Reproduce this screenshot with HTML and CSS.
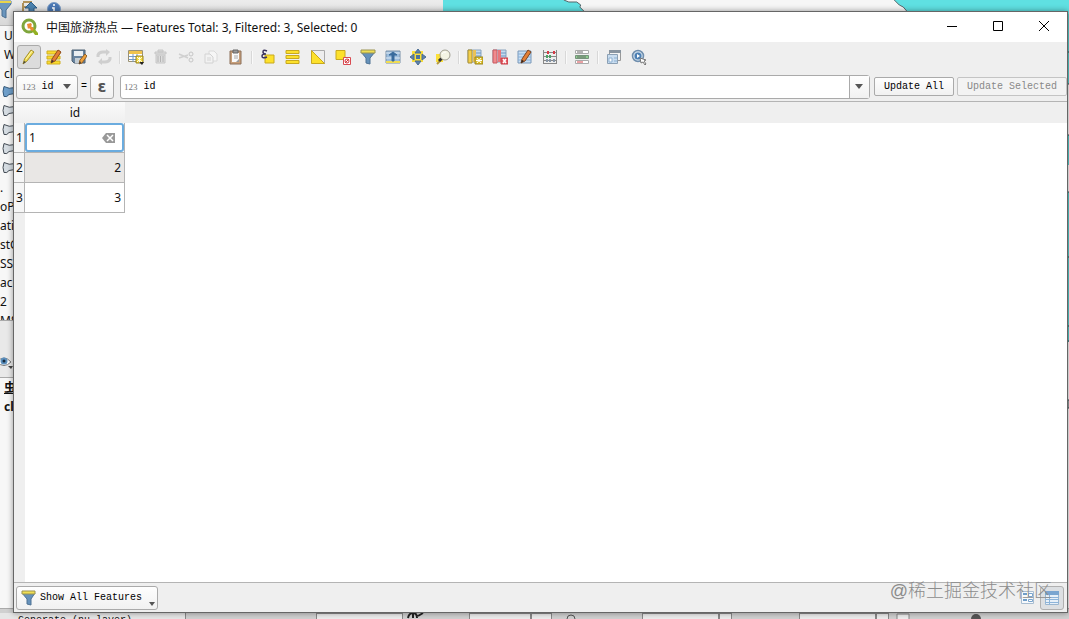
FILE: index.html
```html
<!DOCTYPE html>
<html lang="en">
<head>
    <meta charset="utf-8">
    <title>中国旅游热点 — Attribute Table</title>
    <link rel="stylesheet" href="styles.css">
</head>
<body>
    <!-- main application behind the dialog -->
    <div class="desktop">
        <div class="workspace">
            <div class="side">
                <div class="sideTools">
                    <svg width="72" height="20" viewBox="0 0 72 20">
                        <path d="M-3 1h14v3l-5 6v8l-4-2v-6l-5-6z" fill="#6b96bd" stroke="#4b6f91"/>
                        <path d="M-3 1h14v2h-14z" fill="#e8d44a"/>
                        <path d="M23 2h9M23 7h7M23 12h7M23 3v11" stroke="#b0935c" stroke-width="2" fill="none"/>
                        <path d="M31 2l6 6h-3v8h-5v-8h-4z" fill="#4c83b0" stroke="#2f5f88"/>
                        <circle cx="54" cy="9" r="6.500" fill="#4a78b4" stroke="#7f9ec4"/>
                        <path d="M54 4v2M52 8h2v5M52 13h4" stroke="#fff" stroke-width="1.500" fill="none"/>
                    </svg>
                </div>
                <ul class="browser">
                    <li>U</li>
                    <li>W</li>
                    <li>cl</li>
                    <li><svg width="14" height="14" viewBox="0 0 14 14"><path d="M3 2q-2 5 0 10q3 1 5-2l6-1V3q-6 2-11-1z" fill="#6f9fca" stroke="#35597a"/></svg></li>
                    <li><svg width="14" height="14" viewBox="0 0 14 14"><path d="M3 2q-2 5 0 10q3 1 5-2l6-1V3q-6 2-11-1z" fill="#d5dce2" stroke="#444c55"/></svg></li>
                    <li><svg width="14" height="14" viewBox="0 0 14 14"><path d="M3 2q-2 5 0 10q3 1 5-2l6-1V3q-6 2-11-1z" fill="#d5dce2" stroke="#444c55"/></svg></li>
                    <li><svg width="14" height="14" viewBox="0 0 14 14"><path d="M3 2q-2 5 0 10q3 1 5-2l6-1V3q-6 2-11-1z" fill="#d5dce2" stroke="#444c55"/></svg></li>
                    <li><svg width="14" height="14" viewBox="0 0 14 14"><path d="M3 2q-2 5 0 10q3 1 5-2l6-1V3q-6 2-11-1z" fill="#d5dce2" stroke="#444c55"/></svg></li>
                </ul>
                <ul class="browser providers">
                    <li>.</li>
                    <li>oP</li>
                    <li>ati</li>
                    <li>stG</li>
                    <li>SSQ</li>
                    <li>ac</li>
                    <li>2</li>
                    <li>MS</li>
                </ul>
                <div class="layerTools">
                    <svg width="16" height="14" viewBox="0 0 16 14">
                        <path d="M-3 7q7-8 14 0q-7 7-14 0z" fill="#fff" stroke="#777"/>
                        <circle cx="4" cy="6" r="3.500" fill="#5b8fbd"/>
                        <circle cx="4" cy="6" r="1.500" fill="#16293c"/>
                        <path d="M8 11h5l-2 3z" fill="#444"/>
                    </svg>
                </div>
                <ul class="browser layers">
                    <li><u>虫</u></li>
                    <li>cl</li>
                </ul>
            </div>
            <svg class="map" viewBox="0 0 627 608" preserveAspectRatio="none">
                <path d="M0 0h121l5 2h8l4 3-1 2 6 6v595H0z" fill="#5fe0e2"/>
                <path d="M121 0l5 2h8l4 3-1 2 6 6" fill="none" stroke="#56666a"/>
                <path d="M452 0l5 5 4 2 6 7h160V0z" fill="#5fe0e2"/>
                <path d="M452 0l5 5 4 2 6 7" fill="none" stroke="#56666a"/>
                <path d="M624 14h3v70h-3zM624 135h3v30h-3zM624 192h3v150h-3z" fill="#55cfcc"/>
                <path d="M624 52h3M624 84h3M624 135h3M624 192h3M624 257h3M624 326h3M624 341h3M624 400h3v8h-3" stroke="#33494c" fill="none"/>
            </svg>
        </div>
        <div class="statusBar">
            <span class="coordLabel"><span>Generate (nu layer)</span></span>
            <span class="statusField wide"></span>
            <svg width="66" height="8" viewBox="0 0 66 8"><path d="M5 7q1-5 5-5t4 5M10 3v4M15 5l5-3" stroke="#222" stroke-width="2" fill="none"/></svg>
            <span class="statusField medium"></span>
            <span class="statusField small"></span>
            <svg class="grow" height="8"><circle cx="19" cy="8" r="4" fill="none" stroke="#555"/></svg>
            <span class="statusField scale"></span>
            <span class="statusField spin"></span>
            <span class="statusGap"></span>
            <span class="statusField scale"></span>
            <span class="statusField spin"></span>
            <svg width="180" height="8" viewBox="0 0 180 8"><path d="M8 8V3h12v5" fill="#eee" stroke="#888"/><circle cx="87" cy="8" r="5" fill="#555"/></svg>
        </div>
    </div>

    <div class="window">
        <div class="titleBar">
            <svg width="18" height="18" viewBox="0 0 18 18">
                <circle cx="8" cy="8" r="6" fill="none" stroke="#7fa63c" stroke-width="3"/>
                <path d="M9 10l3-1 5 6v2h-3z" fill="#93b023"/>
                <path d="M6 6l4-1 1 2-1 1 3 3-2 2-3-3-1 1z" fill="#ee8a33"/>
            </svg>
            <h1>中国旅游热点 — Features Total: 3, Filtered: 3, Selected: 0</h1>
            <button class="winButton" aria-label="Minimize"><svg width="12" height="12" viewBox="0 0 12 12"><path d="M1 5.500h10" stroke="#000"/></svg></button>
            <button class="winButton" aria-label="Maximize"><svg width="12" height="12" viewBox="0 0 12 12"><path d="M1.500 0.500h9v9h-9z" fill="none" stroke="#000"/></svg></button>
            <button class="winButton" aria-label="Close"><svg width="12" height="12" viewBox="0 0 12 12"><path d="M1 0l10 10M11 0L1 10" stroke="#000"/></svg></button>
        </div>

        <div class="toolBar">
            <button class="tool active" aria-label="Toggle editing mode"><svg viewBox="0 0 16 16"><path d="M2 15l1.500-5L10 1l3 2-7 9z" fill="#f3df54" stroke="#a48f2c"/><path d="M2 15l1-3 2 1z" fill="#444"/><path d="M5 10l6-8" stroke="#fff8b8"/></svg></button>
            <button class="tool" aria-label="Toggle multi edit mode"><svg viewBox="0 0 16 16"><path d="M1 2h13v3H1zM1 7h13v3H1zM1 12h13v3H1z" fill="#fbdc2d" stroke="#cfae20"/><path d="M5 14l1-4 6-9 3 2-6 9z" fill="#e37f36" stroke="#8f4b22"/><path d="M5 14l1-3 2 1z" fill="#333"/></svg></button>
            <button class="tool" aria-label="Save edits"><svg viewBox="0 0 16 16"><path d="M1 1h13v13H3l-2-2z" fill="#6884a0" stroke="#4c6073"/><path d="M3 2h9v5H3z" fill="#e9eef2"/><path d="M4 9h6v5H4z" fill="#c5ced5"/><path d="M8 15l1-4 5-6 2 2-5 7z" fill="#f0a23c" stroke="#8f602a"/><path d="M8 15l1-3 1 2z" fill="#333"/></svg></button>
            <button class="tool" disabled aria-label="Reload the table"><svg viewBox="0 0 16 16"><path d="M2 8V6q1-3 5-3h3M14 8v2q-1 3-5 3H6" fill="none" stroke="#cfcfcf" stroke-width="3"/><path d="M10 0l4 3-4 4zM6 9l-4 4 4 3z" fill="#cfcfcf"/></svg></button>
            <span class="sep"></span>
            <button class="tool" aria-label="Add feature"><svg viewBox="0 0 16 16"><path d="M0.500 1.500h14v11h-14z" fill="#fff" stroke="#9b9274"/><path d="M1 2h13v3H1z" fill="#f0c34c"/><path d="M1 7.500h13M1 10.500h13M5 5v8M9 5v8" stroke="#739ac4"/><path d="M8 7h7v7H8z" fill="#f4da3b" stroke="#998321"/><path d="M9 8l5 5M14 8l-5 5M11.500 8v6" stroke="#fffce2"/><path d="M11 13h5l-2 3z" fill="#222"/></svg></button>
            <button class="tool" disabled aria-label="Delete selected features"><svg viewBox="0 0 16 16"><path d="M2 3h11v2H2zM5 1h5v2H5zM3 6h9v8H3z" fill="#ddd" stroke="#c6c6c6"/><path d="M5 7v6M7.500 7v6M10 7v6" stroke="#b4b4b4"/></svg></button>
            <button class="tool" disabled aria-label="Cut"><svg viewBox="0 0 16 16"><path d="M1 5l9 4M1 9l9-3" stroke="#d0d0d0" stroke-width="1.500"/><circle cx="13" cy="5" r="2" fill="none" stroke="#c6c6c6"/><circle cx="13" cy="11" r="2" fill="none" stroke="#c6c6c6"/></svg></button>
            <button class="tool" disabled aria-label="Copy"><svg viewBox="0 0 16 16"><path d="M6 2h5l3 3v7H6z" fill="#f6f6f6" stroke="#dadada"/><path d="M2 5h5l3 3v6H2z" fill="#f2f2f2" stroke="#d2d2d2"/><path d="M4 9h4M4 11h4" stroke="#d4d4d4"/></svg></button>
            <button class="tool" aria-label="Paste"><svg viewBox="0 0 16 16"><path d="M2 2h11v13H2z" fill="#c9a07b" stroke="#8c705a"/><path d="M4 4h7v9H4z" fill="#fafafa"/><path d="M5 1h5v3H5z" fill="#999" stroke="#666"/><path d="M6 7h4M6 9h4" stroke="#aaa"/><path d="M8 13l3-3v3z" fill="#999"/></svg></button>
            <span class="sep"></span>
            <button class="tool" aria-label="Select by expression"><svg viewBox="0 0 16 16"><path d="M5 6h9v8H5z" fill="#fde12c" stroke="#c8a91e"/><path d="M7 2Q3 0 3 3q0 2 3 2-4 0-4 2 0 3 5 1" fill="none" stroke="#3d3560" stroke-width="1.500"/></svg></button>
            <button class="tool" aria-label="Select all"><svg viewBox="0 0 16 16"><path d="M1 1.500h13v3H1zM1 6.500h13v3H1zM1 11.500h13v3H1z" fill="#fde12c" stroke="#c8a91e"/></svg></button>
            <button class="tool" aria-label="Invert selection"><svg viewBox="0 0 16 16"><path d="M1.500 1.500h13v13z" fill="#eee" stroke="#aaa"/><path d="M1.500 1.500v13h13z" fill="#fde12c" stroke="#c8a91e"/></svg></button>
            <button class="tool" aria-label="Deselect all"><svg viewBox="0 0 16 16"><path d="M1 1.500h9v9H1z" fill="#fde12c" stroke="#c8a91e"/><path d="M8.500 8.500h7v7h-7z" fill="#fff" stroke="#d94b52"/><circle cx="12" cy="12" r="2" fill="none" stroke="#d4353d"/><path d="M10 14l4-4" stroke="#d4353d"/></svg></button>
            <button class="tool" aria-label="Filter features"><svg viewBox="0 0 16 16"><path d="M1 3h14l-5 6v6l-4-1V9z" fill="#6692bb" stroke="#4e7294"/><path d="M1 1h14v3H1z" fill="#f0df54" stroke="#9a9350"/></svg></button>
            <button class="tool" aria-label="Move selection to top"><svg viewBox="0 0 16 16"><path d="M1 2h14v12H1z" fill="#9bbcdc" stroke="#7890a8"/><path d="M1 12h14v2H1z" fill="#f0dc52"/><path d="M1 4h14M1 9h14" stroke="#dfeaf4"/><path d="M8 3l4 3H9v6H7V6H4z" fill="#386b9c" stroke="#386b9c"/></svg></button>
            <button class="tool" aria-label="Pan map to selected rows"><svg viewBox="0 0 16 16"><path d="M2 2h11v11H2z" fill="#fbe038"/><path d="M8 0l3 4H5zM8 16l3-4H5zM0 8l4-3v6zM16 8l-4-3v6z" fill="#5d83ad" stroke="#4a6c92"/><path d="M6 6h4v4H6z" fill="#4d749e"/></svg></button>
            <button class="tool" aria-label="Zoom map to selected rows"><svg viewBox="0 0 16 16"><path d="M1 5h7v8H1z" fill="#fbe038"/><path d="M2 15l3-3" stroke="#b59a3c" stroke-width="2"/><path d="M4 12l3-3" stroke="#333" stroke-width="3"/><circle cx="10" cy="6" r="5" fill="#f4f4e4" stroke="#a09e91"/><path d="M7 5q1-2 4-2" stroke="#fff" fill="none"/></svg></button>
            <span class="sep"></span>
            <button class="tool" aria-label="New field"><svg viewBox="0 0 16 16"><path d="M1 1h13v12H1z" fill="#c5daee" stroke="#88a3bd"/><path d="M7 4h7M7 7h7M7 10h7" stroke="#6d97c2"/><path d="M1 1h4v13H1z" fill="#f3cf4b" stroke="#a88f36"/><path d="M6 1h3v12H6z" fill="#e9c258"/><path d="M8 8h8v7H8z" fill="#dec026" stroke="#9a8520"/><path d="M10 9l4 5M14 9l-4 5M9 11.500h6" stroke="#fff"/></svg></button>
            <button class="tool" aria-label="Delete field"><svg viewBox="0 0 16 16"><path d="M1 1h13v12H1z" fill="#c5daee" stroke="#88a3bd"/><path d="M7 4h7M7 7h7M7 10h7" stroke="#6d97c2"/><path d="M1 1h4v13H1z" fill="#f08b8e" stroke="#c95b60"/><path d="M6 1h3v12H6z" fill="#e7777c"/><path d="M9 9h7v6H9z" fill="#e5545c" stroke="#c5404a"/><path d="M11 10l3 4M14 10l-3 4" stroke="#fff" stroke-width="1.500"/></svg></button>
            <button class="tool" aria-label="Organize columns"><svg viewBox="0 0 16 16"><path d="M1 2h13v12H1z" fill="#c9dff4" stroke="#7897b8"/><path d="M1 5h13M1 8h13M1 11h13" stroke="#88b0d8"/><path d="M4 14l1-4 6-9 3 2-6 9z" fill="#e37f36" stroke="#7b4524"/><path d="M4 14l1-3 2 1z" fill="#222"/></svg></button>
            <button class="tool" aria-label="Open field calculator"><svg viewBox="0 0 16 16"><path d="M1.500 1v14M14.500 1v14M1 14.500h14M1 3.500h14M1 7.500h14M1 11.500h14" stroke="#888" fill="none"/><path d="M5 2h2v3H5zM11 2h2v3h-2z" fill="#d63a45"/><path d="M4 6h2v3H4zM7 6h2v3H7z" fill="#4ca064"/><path d="M4 10h2v3H4zM7 10h2v3H7zM11 10h2v3h-2z" fill="#8797a8"/></svg></button>
            <span class="sep"></span>
            <button class="tool" aria-label="Conditional formatting"><svg viewBox="0 0 16 16"><path d="M1.500 1.500h13v3h-13z" fill="#fff" stroke="#aaa"/><path d="M1.500 6.500h13v3h-13z" fill="#8fcf91" stroke="#75937a"/><path d="M1.500 11.500h13v3h-13z" fill="#fff" stroke="#aaa"/><path d="M3 3h6M3 8h9" stroke="#666"/><path d="M3 13h6" stroke="#d5444a"/></svg></button>
            <span class="sep"></span>
            <button class="tool" aria-label="Dock attribute table"><svg viewBox="0 0 16 16"><path d="M3.500 1.500h11v10h-11z" fill="#f4f4f4" stroke="#999"/><path d="M3 1h12v3H3z" fill="#8894a0"/><path d="M1.500 5.500h10v9h-10z" fill="#c9ddf0" stroke="#8ba0b5"/><path d="M3 9h3v4H3zM8 9h3M8 12h3" fill="#fff" stroke="#8bafd1"/></svg></button>
            <button class="tool" aria-label="Actions"><svg viewBox="0 0 16 16"><circle cx="7" cy="7" r="5.500" fill="#cfdeeb" stroke="#6f8ead" stroke-width="1.500"/><circle cx="7" cy="7" r="3.500" fill="#4d80b4"/><path d="M6 5l3 2-3 2z" fill="#fff"/><path d="M9 9l6 2-2 1 2 3-1 1-2-3-2 1z" fill="#fff" stroke="#777"/></svg></button>
        </div>

        <div class="fieldBar">
            <label class="combo">
                <span class="type">123</span>
                <select aria-label="Field">
                    <option>id</option>
                </select>
                <svg width="8" height="5" viewBox="0 0 8 5"><path d="M0 0h8L4 5z" fill="#555"/></svg>
            </label>
            <span class="equals">=</span>
            <button class="epsilon" aria-label="Expression dialog">ε</button>
            <div class="combo expression">
                <span class="type">123</span>
                <input type="text" value="id" aria-label="Expression">
                <button class="drop" aria-label="Show fields"><svg width="8" height="5" viewBox="0 0 8 5"><path d="M0 0h8L4 5z" fill="#555"/></svg></button>
            </div>
            <button class="push">Update All</button>
            <button class="push" disabled>Update Selected</button>
        </div>

        <div class="sheet">
            <table>
                <tr>
                    <th class="corner"></th>
                    <th class="colHead">id</th>
                </tr>
                <tr>
                    <th class="rowHead">1</th>
                    <td class="editing">
                        <div class="editor">
                            <input type="text" value="1" aria-label="id, row 1">
                            <button class="clear" aria-label="Clear"><svg width="14" height="10" viewBox="0 0 14 10"><path d="M4 0h9v10H4L0 5z" fill="#999"/><path d="M5 2l6 6M11 2L5 8" stroke="#fff" stroke-width="1.500"/></svg></button>
                        </div>
                    </td>
                </tr>
                <tr class="alt">
                    <th class="rowHead">2</th>
                    <td>2</td>
                </tr>
                <tr>
                    <th class="rowHead">3</th>
                    <td>3</td>
                </tr>
            </table>
        </div>

        <div class="footer">
            <button class="filterButton">
                <svg width="16" height="16" viewBox="0 0 16 16"><path d="M1 3h13l-4 6v6l-4-1V9z" fill="#6692bb" stroke="#4e7294"/><path d="M1 1h13v3H1z" fill="#f0df54" stroke="#9a9350"/></svg>
                <span>Show All Features</span>
                <svg class="more" width="6" height="4" viewBox="0 0 6 4"><path d="M0 0h6L3 4z" fill="#555"/></svg>
            </button>
            <div class="views">
                <button class="view" aria-label="Form view"><svg width="16" height="16" viewBox="0 0 16 16"><path d="M1.500 1.500h12v12h-12z" fill="#f6f9fc" stroke="#a9bdd0"/><path d="M3 4h4M3 10h4" stroke="#6f9dc8" stroke-width="2"/><path d="M8.500 3.500h4v3h-4zM8.500 9.500h4v2h-4z" fill="#fff" stroke="#7ba5cd"/></svg></button>
                <button class="view active" aria-label="Table view"><svg width="16" height="16" viewBox="0 0 16 16"><path d="M1.500 1.500h13v13h-13z" fill="#e7f0f8" stroke="#9ab6d0"/><path d="M1 1h14v4H1z" fill="#79a5d0"/><path d="M1 7.500h14M1 9.500h14M1 12.500h14M5.500 5v10" stroke="#8db4d9"/></svg></button>
            </div>
        </div>
    </div>

    <div class="watermark">@稀土掘金技术社区</div>
</body>
</html>
```

FILE: styles.css
```css
* {
    box-sizing: border-box;
}

body {
    margin: 0;
    height: 100vh;
    overflow: hidden;
    position: relative;
    font-family: "Noto Sans", "Noto Sans CJK SC", sans-serif;
    font-size: 12px;
    color: #111;
}

button, input, select {
    font-family: inherit;
    font-size: inherit;
    color: inherit;
    padding: 0;
    margin: 0;
    border: none;
    background: none;
    outline: none;
}

svg {
    display: block;
    flex: none;
}

/* application behind */
.desktop {
    height: 100%;
    display: flex;
    flex-direction: column;
    background-color: #d0d0d0;
}

.workspace {
    flex: 1;
    min-height: 0;
    display: flex;
    overflow: hidden;
}

.side {
    width: 443px;
    background-color: #f7f7f7;
}

.sideTools {
    height: 26px;
    background: linear-gradient(#ececec, #d8d8d8);
    border-bottom: 1px solid #bbb;
}

.browser {
    list-style: none;
    margin: 0;
    padding: 0;
}

.browser li {
    height: 19px;
    line-height: 19px;
    padding-left: 4px;
}

.browser li svg {
    margin-left: -3px;
    height: 17px;
}

.providers {
    height: 143px;
    overflow: hidden;
    border-bottom: 1px solid #aaa;
}

.providers li {
    padding-left: 0;
}

.layerTools {
    height: 57px;
    display: flex;
    align-items: flex-end;
    padding-bottom: 8px;
    background-color: #e9e9e9;
    border-bottom: 1px solid #aaa;
}

.layers {
    font-weight: bold;
}

.map {
    flex: 1;
    min-width: 0;
    height: 100%;
    background-color: #f6f6f6;
}

.statusBar {
    height: 11px;
    display: flex;
    align-items: flex-end;
    overflow: hidden;
    border-top: 1px solid #aaa;
    background-color: #d0d0d0;
}

.coordLabel {
    width: 316px;
    height: 6px;
    font-family: "Liberation Mono", monospace;
    font-size: 10px;
    line-height: 16px;
}

.coordLabel span {
    display: block;
    width: 186px;
    padding-left: 18px;
    background-color: #e6e6e6;
    border-right: 1px solid #888;
}

.statusField {
    height: 6px;
    border: 1px solid #888;
    border-bottom: none;
    background-color: #ececec;
}

.statusField.wide {
    width: 87px;
}

.statusField.medium {
    width: 62px;
}

.statusField.small {
    width: 21px;
}

.statusField.scale {
    width: 77px;
}

.statusField.spin {
    width: 13px;
}

.statusGap {
    width: 67px;
}

.grow {
    flex: 1;
    min-width: 0;
}

/* attribute table window */
.window {
    position: absolute;
    top: 11px;
    right: 1px;
    bottom: 6px;
    left: 13px;
    display: flex;
    flex-direction: column;
    background-color: #efefef;
    border: 1px solid #666;
    box-shadow: 0 0 6px rgba(0, 0, 0, 0.4);
}

.titleBar {
    height: 30px;
    display: flex;
    align-items: center;
    padding-left: 7px;
    background-color: white;
}

.titleBar h1 {
    flex: 1;
    margin: 0 0 0 7px;
    font-size: 12px;
    font-weight: normal;
    white-space: nowrap;
}

.winButton {
    width: 46px;
    height: 30px;
    display: flex;
    align-items: center;
    justify-content: center;
}

.toolBar {
    height: 30px;
    display: flex;
    align-items: center;
    gap: 1px;
    padding-left: 3px;
}

.tool {
    width: 24px;
    height: 24px;
    display: flex;
    align-items: center;
    justify-content: center;
    border-radius: 3px;
}

.tool svg {
    width: 16px;
    height: 16px;
}

.tool.active {
    background-color: #dcdcdc;
    border: 1px solid #aaa;
}

.sep {
    width: 2px;
    height: 13px;
    margin: 0 2px;
    background-color: #fafafa;
    border-left: 1px solid #d8d8d8;
}

.fieldBar {
    height: 30px;
    display: flex;
    align-items: center;
    padding-left: 2px;
    border-bottom: 1px solid #b4b4b4;
    font-family: "Liberation Mono", monospace;
    font-size: 10px;
    color: black;
}

.combo {
    width: 62px;
    height: 24px;
    display: flex;
    align-items: center;
    padding: 0 6px 0 5px;
    border: 1px solid #aaa;
    border-radius: 3px;
    background: linear-gradient(#fefefe, #f1f1f1);
}

.combo select {
    flex: 1;
    min-width: 0;
    appearance: none;
}

.type {
    margin-right: 6px;
    font-family: "Liberation Serif", serif;
    font-size: 9px;
    color: #777;
}

.equals {
    width: 12px;
    text-align: center;
}

.epsilon {
    width: 24px;
    height: 24px;
    border: 1px solid #aaa;
    border-radius: 3px;
    background: linear-gradient(#fefefe, #f1f1f1);
    font-family: "DejaVu Sans", sans-serif;
    font-size: 16px;
    font-weight: bold;
    line-height: 16px;
    color: #555;
}

.expression {
    flex: 1;
    margin: 0 4px 0 6px;
    padding: 0 0 0 3px;
    background: white;
}

.expression input {
    flex: 1;
    min-width: 0;
}

.drop {
    width: 20px;
    height: 22px;
    display: flex;
    align-items: center;
    justify-content: center;
    border-left: 1px solid #aaa;
    background: linear-gradient(#fefefe, #f1f1f1);
}

.push {
    height: 19px;
    padding: 0 9px;
    border: 1px solid #aaa;
    border-radius: 2px;
    background: linear-gradient(#fefefe, #f1f1f1);
    white-space: nowrap;
}

.push + .push {
    margin-left: 3px;
}

.push:disabled {
    color: #888;
    border-color: #c4c4c4;
    background: #f3f3f3;
}

/* header strip and row number gutter run past the last cell */
.sheet {
    flex: 1;
    min-height: 0;
    background:
        linear-gradient(#efefef, #efefef) 0 0 / 100% 21px no-repeat,
        linear-gradient(#efefef, #efefef) 0 0 / 11px 100% no-repeat,
        white;
}

table {
    width: 111px;
    table-layout: fixed;
    border-collapse: separate;
    border-spacing: 0;
}

th, td {
    padding: 0;
    font-weight: normal;
}

.corner {
    width: 11px;
}

.corner, .colHead {
    height: 21px;
    background: linear-gradient(#fafafa, #efefef);
}

.rowHead {
    height: 30px;
    padding-left: 1px;
    border-right: 1px solid #b4b4b4;
    border-bottom: 1px solid #b4b4b4;
    background-color: #f6f6f6;
}

td {
    height: 30px;
    padding-right: 3px;
    text-align: right;
    background-color: white;
    border-right: 1px solid #b4b4b4;
    border-bottom: 1px solid #b4b4b4;
}

.alt td {
    background-color: #e9e7e5;
}

td.editing {
    padding: 0;
}

.editor {
    height: 29px;
    display: flex;
    align-items: center;
    padding: 0 6px 0 2px;
    border: 2px solid #6bacdf;
    border-radius: 3px;
}

.editor input {
    flex: 1;
    min-width: 0;
}

.footer {
    height: 30px;
    display: flex;
    align-items: center;
    justify-content: space-between;
    padding: 0 3px 0 2px;
    border-top: 1px solid #b4b4b4;
}

.filterButton {
    width: 142px;
    height: 24px;
    display: flex;
    align-items: center;
    gap: 3px;
    padding: 0 2px 0 4px;
    border: 1px solid #aaa;
    border-radius: 3px;
    background: linear-gradient(#fefefe, #f1f1f1);
    font-family: "Liberation Mono", monospace;
    font-size: 10px;
    color: black;
    white-space: nowrap;
}

.more {
    align-self: flex-end;
    margin: 0 0 3px auto;
}

.views {
    display: flex;
}

.view {
    width: 24px;
    height: 24px;
    display: flex;
    align-items: center;
    justify-content: center;
    border-radius: 3px;
}

.view.active {
    background-color: #dcdfe2;
    border: 1px solid #b0b0b0;
}

.watermark {
    position: absolute;
    right: 17px;
    bottom: 16px;
    font-family: "Liberation Sans", "Noto Sans CJK SC", sans-serif;
    font-size: 18px;
    font-weight: 300;
    line-height: 24px;
    color: #8c8c8c;
    pointer-events: none;
}
```
